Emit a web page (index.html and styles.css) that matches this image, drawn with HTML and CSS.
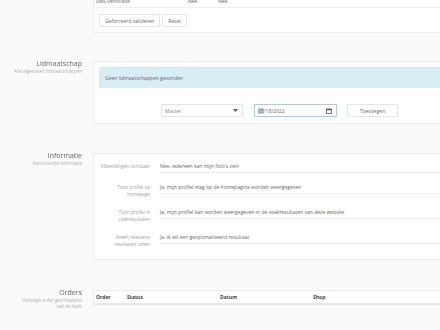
FILE: index.html
```html
<!DOCTYPE html>
<html lang="nl">
<head>
    <meta charset="UTF-8">
    <title>Klant - Profiel</title>
    <link rel="stylesheet" href="styles.css">
</head>
<body>
    <div class="page">
        <div class="section section-first">
            <div class="section-info"></div>
            <div class="card card-verify">
                <div class="verify-row">
                    <span class="verify-label">SMS verificatie</span>
                    <span class="verify-value">Nee</span>
                    <span class="verify-value">Nee</span>
                </div>
                <div class="button-row">
                    <button class="btn">Geforceerd valideren</button>
                    <button class="btn">Reset</button>
                </div>
            </div>
        </div>

        <div class="section section-membership">
            <div class="section-info">
                <div class="section-title">Lidmaatschap</div>
                <div class="section-sub">Alle afgesloten lidmaatschappen</div>
            </div>
            <div class="card card-membership">
                <div class="alert">Geen lidmaatschappen gevonden</div>
                <div class="add-row">
                    <div class="select">
                        <span>Master</span>
                        <svg width="5" height="3" viewBox="0 0 5 3"><path d="M0 0h5L2.5 3z" fill="#555"/></svg>
                    </div>
                    <div class="date-input">
                        <span><span class="date-part">05</span>/18/2022</span>
                        <svg width="6" height="6" viewBox="0 0 6 6"><rect x="0.5" y="1" width="5" height="4.5" fill="none" stroke="#555" stroke-width="0.8"/><rect x="0.5" y="1" width="5" height="1.2" fill="#555"/></svg>
                    </div>
                    <button class="btn btn-add">Toevoegen</button>
                </div>
            </div>
        </div>

        <div class="section section-info-block">
            <div class="section-info">
                <div class="section-title">Informatie</div>
                <div class="section-sub">Aanvullende informatie</div>
            </div>
            <div class="card card-info">
                <div class="field">
                    <div class="field-label">Afbeeldingen zichtbaar</div>
                    <div class="field-value">Nee, iedereen kan mijn foto's zien</div>
                </div>
                <div class="field">
                    <div class="field-label">Toon profiel op homepage</div>
                    <div class="field-value">Ja, mijn profiel mag op de homepagina worden weergegeven</div>
                </div>
                <div class="field">
                    <div class="field-label">Toon profiel in zoekresultaten</div>
                    <div class="field-value">Ja, mijn profiel kan worden weergegeven in de zoekresultaten van deze website</div>
                </div>
                <div class="field">
                    <div class="field-label">Alleen relevante resultaten tonen</div>
                    <div class="field-value">Ja, ik wil een geoptimaliseerd resultaat</div>
                </div>
            </div>
        </div>

        <div class="section section-orders">
            <div class="section-info">
                <div class="section-title">Orders</div>
                <div class="section-sub">Volledige order geschiedenis van de klant</div>
            </div>
            <div class="card card-orders">
                <div class="orders-head">
                    <span class="col-order">Order</span>
                    <span class="col-status">Status</span>
                    <span class="col-date">Datum</span>
                    <span class="col-shop">Shop</span>
                </div>
            </div>
        </div>
    </div>
</body>
</html>
```

FILE: styles.css
```css
html, body {
    margin: 0;
    padding: 0;
    overflow: hidden;
}

body {
    font-family: 'Open Sans', 'Liberation Sans', sans-serif;
    font-size: 5px;
    color: #666;
    background-color: #fafafa;
}

.page {
    width: 520px;
    margin-top: -6px;
}

.section {
    display: flex;
    align-items: flex-start;
}

.section-info {
    width: 82px;
    flex-shrink: 0;
    margin-right: 11px;
    margin-top: -2px;
    text-align: right;
}

.section-title {
    font-size: 7px;
    color: #666;
    line-height: 9px;
    will-change: transform;
}

.section-sub {
    font-size: 4.5px;
    color: #b0b0b0;
    line-height: 6px;
}

.card {
    flex: 1;
    background-color: white;
    border: 1px solid #ececec;
    border-right: none;
}

/* verificatie */
.card-verify {
    border-top: none;
}

.verify-row {
    display: flex;
    height: 13px;
    align-items: center;
    padding-left: 2px;
    border-bottom: 1px solid #f0f0f0;
}

.verify-label {
    width: 92px;
}

.verify-value {
    width: 30px;
}

.button-row {
    display: flex;
    gap: 2px;
    padding: 6px 5px 5px;
}

.btn {
    font-family: inherit;
    font-size: 5px;
    color: #666;
    background-color: white;
    border: 1px solid #e4e4e4;
    border-radius: 1px;
    height: 13px;
    padding: 0 5px;
}

/* lidmaatschap */
.section-membership {
    margin-top: 28px;
}

.card-membership {
    padding: 5px 0 6px 5px;
}

.alert {
    background-color: #d9edf7;
    height: 20px;
    line-height: 20px;
    padding-left: 6px;
    font-size: 5px;
    border-top: 1px solid #d2e7f2;
}

.add-row {
    display: flex;
    align-items: center;
    margin-top: 16px;
    padding-left: 62px;
}

.select, .date-input {
    display: flex;
    align-items: center;
    justify-content: space-between;
    box-sizing: border-box;
    height: 13px;
    width: 82px;
    padding: 0 4px 0 3px;
    background-color: white;
    border: 1px solid #e4e4e4;
    border-radius: 1px;
}

.select span {
    color: #888;
}

.date-input {
    margin-left: 11px;
    width: 83px;
    border-color: #a9cbea;
    box-shadow: 0 0 1px #c6dcf2;
}

.date-part {
    background-color: #b9d3ee;
}

.btn-add {
    margin-left: 10px;
    width: 51px;
    padding: 0;
}

/* informatie */
.section-info-block {
    margin-top: 29px;
}

.card-info {
    padding: 7px 0 11px;
}

.field {
    display: flex;
    align-items: flex-start;
}

.field + .field {
    margin-top: 9px;
}

.field-label {
    width: 52px;
    margin-left: 4px;
    padding-top: 2px;
    text-align: right;
    font-size: 4.6px;
    line-height: 7px;
    color: #a0a0a0;
}

.field-value {
    flex: 1;
    margin-left: 10px;
    line-height: 11px;
    border-bottom: 1px solid #ededed;
    white-space: nowrap;
}

/* orders */
.section-orders {
    margin-top: 30px;
}

.section-orders .section-sub {
    padding-left: 20px;
}

.card-orders {
    border-bottom: 2px solid #e8e8e8;
}

.orders-head {
    display: flex;
    height: 12px;
    align-items: center;
    padding-left: 2px;
    font-weight: bold;
    color: #444;
}

.col-order { width: 31px; }
.col-status { width: 93px; }
.col-date { width: 93px; }
```
